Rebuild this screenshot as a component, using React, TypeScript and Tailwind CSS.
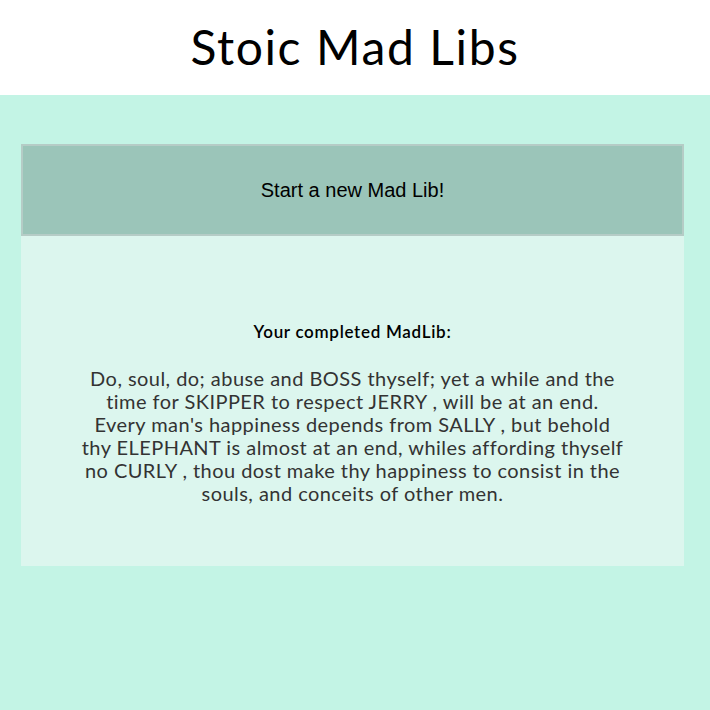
const storyLines = [
  "Do, soul, do; abuse and BOSS thyself; yet a while and the",
  "time for SKIPPER to respect JERRY , will be at an end.",
  "Every man's happiness depends from SALLY , but behold",
  "thy ELEPHANT is almost at an end, whiles affording thyself",
  "no CURLY , thou dost make thy happiness to consist in the",
  "souls, and conceits of other men.",
];

export default function App() {
  return (
    <div className="min-h-[710px] bg-[#c3f4e5] font-['Lato','Open_Sans',sans-serif]">
      {/* header */}
      <header className="h-[95px] bg-white flex items-center justify-center">
        <h1 className="text-[48px] font-normal text-black leading-none tracking-[1.6px] -mt-[2px]">
          Stoic Mad Libs
        </h1>
      </header>

      <main className="pl-[21px] pr-[26px] pt-[49px] pb-10">
        <button className="w-full h-[92px] bg-[#9bc5b9] border-2 border-[#b5ccc6] font-['Liberation_Sans',Arial,sans-serif] text-[20px] text-black">
          Start a new Mad Lib!
        </button>

        <section className="bg-[#dcf6ee] h-[330px] flex flex-col items-center pt-[83px]">
          <h2 className="text-[17px] font-semibold text-black tracking-[0.7px]">Your completed MadLib:</h2>
          <p className="mt-[22px] text-center text-[20px] leading-[23px] tracking-[0.45px] text-[#333]">
            {storyLines.map((line) => (
              <span key={line} className="block whitespace-nowrap">
                {line}
              </span>
            ))}
          </p>
        </section>
      </main>
    </div>
  );
}
